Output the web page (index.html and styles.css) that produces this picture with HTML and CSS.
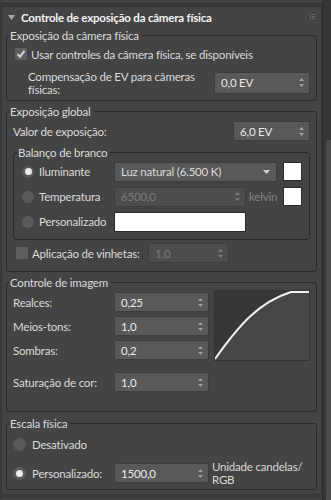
FILE: index.html
```html
<!DOCTYPE html>
<html lang="pt-br">

<head>
    <meta charset="UTF-8">
    <meta name="viewport" content="width=device-width, initial-scale=1.0">
    <title>Controle de exposição da câmera física</title>
    <link rel="stylesheet" href="styles.css">
</head>

<body>
    <div class="main">
        <div class="prev-panel"></div>

        <div class="rollout">
            <div class="rollout-head">
                <svg class="caret" width="7" height="5" viewBox="0 0 7 5"><path d="M0 0H7L3.5 5Z" fill="#a6a6a6"/></svg>
                <span class="rollout-title">Controle de exposição da câmera física</span>
                <svg class="grip" width="5" height="5" viewBox="0 0 5 5" fill="#7c7c7c">
                    <rect x="0" y="0" width="1" height="1"/><rect x="2" y="0" width="1" height="1"/><rect x="4" y="0" width="1" height="1"/>
                    <rect x="0" y="2" width="1" height="1"/><rect x="2" y="2" width="1" height="1"/><rect x="4" y="2" width="1" height="1"/>
                    <rect x="0" y="4" width="1" height="1"/><rect x="2" y="4" width="1" height="1"/><rect x="4" y="4" width="1" height="1"/>
                </svg>
            </div>

            <!-- Exposição da câmera física -->
            <fieldset class="group group-camera">
                <legend>Exposição da câmera física</legend>
                <div class="check-row">
                    <span class="checkbox">
                        <svg width="12" height="12" viewBox="0 0 12 12"><path d="M2.5 6.2L5 8.7L9.6 2.8" stroke="#d2d2d2" stroke-width="2" fill="none"/></svg>
                    </span>
                    <span>Usar controles da câmera física, se disponíveis</span>
                </div>
                <div class="ev-row">
                    <span class="ev-label">Compensação de EV para câmeras físicas:</span>
                    <div class="spinner w-ev">
                        <span>0,0 EV</span>
                        <svg class="arrows" width="5" height="9" viewBox="0 0 5 9"><path d="M2.5 0L5 3H0Z M0 6H5L2.5 9Z" fill="#a0a0a0"/></svg>
                    </div>
                </div>
            </fieldset>

            <!-- Exposição global -->
            <fieldset class="group group-global">
                <legend>Exposição global</legend>
                <div class="value-row">
                    <span>Valor de exposição:</span>
                    <div class="spinner w-exp">
                        <span>6,0 EV</span>
                        <svg class="arrows" width="5" height="9" viewBox="0 0 5 9"><path d="M2.5 0L5 3H0Z M0 6H5L2.5 9Z" fill="#a0a0a0"/></svg>
                    </div>
                </div>

                <fieldset class="subgroup">
                    <legend>Balanço de branco</legend>
                    <div class="wb-row">
                        <span class="wb-label"><span class="radio on"></span>Iluminante</span>
                        <div class="dropdown">
                            <span>Luz natural (6.500 K)</span>
                            <svg width="7" height="4" viewBox="0 0 7 4"><path d="M0 0H7L3.5 4Z" fill="#cfcfcf"/></svg>
                        </div>
                        <span class="swatch"></span>
                    </div>
                    <div class="wb-row">
                        <span class="wb-label"><span class="radio"></span>Temperatura</span>
                        <div class="spinner disabled w-temp">
                            <span>6500,0</span>
                            <svg class="arrows" width="5" height="9" viewBox="0 0 5 9"><path d="M2.5 0L5 3H0Z M0 6H5L2.5 9Z" fill="#7a7a7a"/></svg>
                        </div>
                        <span class="unit-muted">kelvin</span>
                        <span class="swatch"></span>
                    </div>
                    <div class="wb-row">
                        <span class="wb-label"><span class="radio"></span>Personalizado</span>
                        <span class="color-field"></span>
                    </div>
                </fieldset>

                <div class="vignette-row">
                    <span class="vignette-label"><span class="checkbox"></span>Aplicação de vinhetas:</span>
                    <div class="spinner disabled w-vig">
                        <span>1,0</span>
                        <svg class="arrows" width="5" height="9" viewBox="0 0 5 9"><path d="M2.5 0L5 3H0Z M0 6H5L2.5 9Z" fill="#7a7a7a"/></svg>
                    </div>
                </div>
            </fieldset>

            <!-- Controle de imagem -->
            <fieldset class="group group-image">
                <legend>Controle de imagem</legend>
                <div class="tone-grid">
                    <span>Realces:</span>
                    <div class="spinner">
                        <span>0,25</span>
                        <svg class="arrows" width="5" height="9" viewBox="0 0 5 9"><path d="M2.5 0L5 3H0Z M0 6H5L2.5 9Z" fill="#a0a0a0"/></svg>
                    </div>
                    <svg class="curve" width="96" height="71" viewBox="0 0 96 71">
                        <rect x="0" y="0" width="96" height="71" fill="#474747"/>
                        <path d="M1 69C25 35 45 12 77 2V0H0Z" fill="#373737"/>
                        <path d="M1 69C25 35 45 12 77 2H95" stroke="#f2f2f2" stroke-width="2" fill="none"/>
                        <rect x="0.5" y="0.5" width="95" height="70" fill="none" stroke="#333"/>
                    </svg>
                    <span>Meios-tons:</span>
                    <div class="spinner">
                        <span>1,0</span>
                        <svg class="arrows" width="5" height="9" viewBox="0 0 5 9"><path d="M2.5 0L5 3H0Z M0 6H5L2.5 9Z" fill="#a0a0a0"/></svg>
                    </div>
                    <span>Sombras:</span>
                    <div class="spinner">
                        <span>0,2</span>
                        <svg class="arrows" width="5" height="9" viewBox="0 0 5 9"><path d="M2.5 0L5 3H0Z M0 6H5L2.5 9Z" fill="#a0a0a0"/></svg>
                    </div>
                </div>
                <div class="sat-row">
                    <span>Saturação de cor:</span>
                    <div class="spinner">
                        <span>1,0</span>
                        <svg class="arrows" width="5" height="9" viewBox="0 0 5 9"><path d="M2.5 0L5 3H0Z M0 6H5L2.5 9Z" fill="#a0a0a0"/></svg>
                    </div>
                </div>
            </fieldset>

            <!-- Escala física -->
            <fieldset class="group group-scale">
                <legend>Escala física</legend>
                <div class="scale-row">
                    <span class="radio big"></span>
                    <span>Desativado</span>
                </div>
                <div class="custom-row">
                    <span class="scale-label"><span class="radio big on"></span>Personalizado:</span>
                    <div class="spinner">
                        <span>1500,0</span>
                        <svg class="arrows" width="5" height="9" viewBox="0 0 5 9"><path d="M2.5 0L5 3H0Z M0 6H5L2.5 9Z" fill="#a0a0a0"/></svg>
                    </div>
                    <span class="unit">Unidade candelas/<br>RGB</span>
                </div>
            </fieldset>
        </div>

        <div class="next-panel"></div>
    </div>

    <div class="scrollbar">
        <div class="thumb"></div>
    </div>
</body>

</html>
```

FILE: styles.css
```css
* {
    margin: 0;
    padding: 0;
    box-sizing: border-box;
}

body {
    display: flex;
    width: 331px;
    height: 500px;
    overflow: hidden;
    background-color: #3a3a3a;
    font-family: Lato, "Liberation Sans", Arial, sans-serif;
    font-size: 11.5px;
    letter-spacing: -0.2px;
    line-height: 13px;
    color: #dadada;
}

.main {
    width: 322px;
}

.prev-panel {
    height: 4px;
    margin-left: 1px;
    width: 321px;
    background: #444;
    border-bottom: 1px solid #303030;
}

.rollout {
    width: 321px;
    margin-left: 1px;
    margin-top: 2px;
    padding-bottom: 4px;
    background: #444;
    border: 1px solid #363636;
    border-radius: 2px;
}

.next-panel {
    margin-left: 1px;
    margin-top: 2px;
    width: 321px;
    height: 10px;
    background: #444;
    border-top: 1px solid #363636;
}

.rollout-head {
    display: flex;
    align-items: center;
    height: 20px;
    padding: 0 6px 0 6px;
}

.caret {
    margin-right: 6px;
}

.rollout-title {
    font-weight: bold;
    color: #f2f2f2;
    flex: 1;
}

.grip {
    margin-top: -2px;
}

/* grupos */
.group {
    min-width: 0;
    margin: 4px 4px 0;
    padding: 0 6px 3px;
    border: 1px solid #2b2b2b;
    border-radius: 3px;
}

.group legend,
.subgroup legend {
    margin-left: -4px;
    padding: 0 3px 0 1px;
    line-height: 13px;
}

.group-camera {
    margin-top: 2px;
}

.check-row {
    display: flex;
    align-items: center;
    gap: 4px;
    height: 20px;
    margin-top: 2px;
    margin-left: 2px;
}

.checkbox {
    display: block;
    flex: none;
    width: 12px;
    height: 12px;
    background: #5e5e5e;
    border-radius: 1px;
}

.checkbox svg {
    display: block;
}

.ev-row {
    display: flex;
    align-items: center;
    justify-content: space-between;
    height: 29px;
    margin-top: 4px;
}

.ev-label {
    width: 176px;
    margin-left: 15px;
}

.spinner {
    display: flex;
    align-items: center;
    justify-content: space-between;
    height: 20px;
    padding: 0 5px 0 6px;
    background: #595959;
    border: 1px solid #3d3d3d;
    border-radius: 2px;
    color: #e9e9e9;
}

.spinner.disabled {
    background: #4d4d4d;
    color: #7b7b7b;
}

.w-ev {
    width: 96px;
    height: 22px;
}

.w-exp {
    width: 77px;
}

.w-temp {
    width: 132px;
}

.w-vig {
    width: 81px;
}

.group-global {
    padding-bottom: 8px;
}

.value-row {
    display: flex;
    align-items: center;
    justify-content: space-between;
    height: 22px;
    margin-top: 2px;
}

.subgroup {
    min-width: 0;
    margin-top: 4px;
    padding: 0 7px 5px 8px;
    border: 1px solid #2b2b2b;
    border-radius: 3px;
}

.subgroup legend {
    margin-left: -5px;
}

.wb-row {
    display: flex;
    align-items: center;
    height: 25px;
}

.wb-label {
    display: flex;
    align-items: center;
    gap: 5px;
    width: 92px;
    flex: none;
}

.radio {
    display: flex;
    align-items: center;
    justify-content: center;
    flex: none;
    width: 12px;
    height: 12px;
    border-radius: 50%;
    background: #5a5a5a;
}

.radio.big {
    width: 13px;
    height: 13px;
}

.radio.on::after {
    content: "";
    width: 7px;
    height: 7px;
    border-radius: 50%;
    background: #ececec;
}

.dropdown {
    display: flex;
    align-items: center;
    justify-content: space-between;
    width: 163px;
    height: 20px;
    padding: 0 6px 0 6px;
    background: #595959;
    border: 1px solid #3d3d3d;
    border-radius: 2px;
}

.swatch {
    width: 19px;
    height: 19px;
    margin-left: auto;
    background: #fff;
    border: 1px solid #2a2a2a;
}

.unit-muted {
    margin-left: 3px;
    color: #828282;
}

.color-field {
    width: 132px;
    height: 20px;
    background: #fff;
    border: 1px solid #2a2a2a;
}

.vignette-row {
    display: flex;
    align-items: center;
    height: 20px;
    margin-top: 3px;
}

.vignette-label {
    display: flex;
    align-items: center;
    gap: 4px;
    width: 135px;
    padding-left: 3px;
    white-space: nowrap;
}

/* controle de imagem */
.group-image {
    padding-bottom: 19px;
}

.tone-grid {
    display: grid;
    grid-template-columns: 101px 95px 1fr;
    grid-template-rows: repeat(3, 20px);
    row-gap: 4px;
    align-items: center;
    margin-top: 3px;
}

.curve {
    display: block;
    grid-column: 3;
    grid-row: 1 / 4;
    align-self: start;
    margin: -2px 0 0 5px;
}

.sat-row {
    display: grid;
    grid-template-columns: 101px 95px;
    align-items: center;
    height: 20px;
    margin-top: 12px;
}

/* escala física */
.group-scale {
    margin-top: 5px;
    padding-bottom: 9px;
}

.scale-row {
    display: flex;
    align-items: center;
    gap: 6px;
    height: 20px;
    margin-top: 4px;
}

.custom-row {
    display: grid;
    grid-template-columns: 101px 95px 1fr;
    align-items: center;
    height: 20px;
    margin-top: 6px;
}

.scale-label {
    display: flex;
    align-items: center;
    gap: 6px;
}

.unit {
    margin-left: 3px;
    white-space: nowrap;
}

.scrollbar {
    width: 9px;
    height: 500px;
    padding: 140px 0 0 3px;
    background: #363636;
    border-left: 1px solid #2c2c2c;
}

.thumb {
    width: 5px;
    height: 360px;
    background: #4c4c4c;
    border-radius: 2px 0 0 0;
}
```
